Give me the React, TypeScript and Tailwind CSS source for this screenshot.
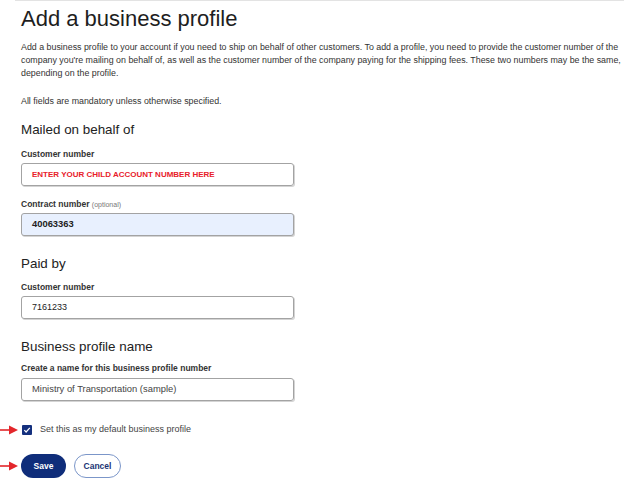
import React from "react";

const font = { fontFamily: '"Liberation Sans", Arial, sans-serif' };

function Arrow() {
  return (
    <svg width="19" height="10" viewBox="0 0 19 10" className="absolute left-[-22px] top-1/2 -translate-y-1/2">
      <line x1="0" y1="5" x2="12" y2="5" stroke="#e3262b" strokeWidth="1.6" />
      <polygon points="10,0.5 19,5 10,9.5" fill="#e3262b" />
    </svg>
  );
}

function Label({ children, className = "" }: { children: React.ReactNode; className?: string }) {
  return (
    <div className={`text-[8.5px] leading-[11px] font-bold text-[#333] ${className}`}>{children}</div>
  );
}

function Field({
  value,
  className = "",
  textClass = "",
}: {
  value: string;
  className?: string;
  textClass?: string;
}) {
  return (
    <div
      className={`mt-[3px] flex h-[23px] w-[273px] items-center rounded-[3px] border border-[#a3a3a3] pl-[10px] shadow-[1px_1px_0_#d4d4d4] ${className}`}
    >
      <span className={textClass}>{value}</span>
    </div>
  );
}

export default function App() {
  return (
    <div className="min-h-[484px] w-[624px] bg-white" style={font}>
      <div className="ml-[15px] h-px bg-[#e3e3e3]" />
      <div className="pl-[21px] pr-[4px]">
        <h1 className="mt-[4px] text-[22px] leading-[28px] font-normal text-[#1e1e1e]">
          Add a business profile
        </h1>
        <p className="mt-[8px] text-[8.85px] leading-[13px] text-[#333]">
          <span className="block whitespace-nowrap">
            Add a business profile to your account if you need to ship on behalf of other customers. To add a profile, you need to provide the customer number of the
          </span>
          <span className="block whitespace-nowrap">
            company you're mailing on behalf of, as well as the customer number of the company paying for the shipping fees. These two numbers may be the same,
          </span>
          <span className="block whitespace-nowrap">depending on the profile.</span>
        </p>
        <p className="mt-[15px] text-[8.85px] leading-[13px] text-[#333]">
          All fields are mandatory unless otherwise specified.
        </p>

        <h2 className="mt-[14px] text-[13.4px] leading-[16px] text-[#222]">Mailed on behalf of</h2>
        <Label className="mt-[11px]">Customer number</Label>
        <Field
          value="ENTER YOUR CHILD ACCOUNT NUMBER HERE"
          textClass="text-[8px] font-bold text-[#e8202a]"
        />
        <Label className="mt-[13px]">
          Contract number <span className="text-[7px] font-normal text-[#777]">(optional)</span>
        </Label>
        <Field
          value="40063363"
          className="bg-[#e8f0fe]"
          textClass="text-[9.4px] font-bold text-[#222]"
        />

        <h2 className="mt-[20px] text-[13.4px] leading-[16px] text-[#222]">Paid by</h2>
        <Label className="mt-[10px]">Customer number</Label>
        <Field value="7161233" textClass="text-[9px] text-[#222]" />

        <h2 className="mt-[20px] text-[13.4px] leading-[16px] text-[#222]">Business profile name</h2>
        <Label className="mt-[8px]">Create a name for this business profile number</Label>
        <Field
          value="Ministry of Transportation (sample)"
          className="mt-[4px]"
          textClass="text-[9.4px] text-[#444]"
        />

        <div className="relative mt-[23px] flex items-center gap-[8px]">
          <Arrow />
          <div className="ml-px flex h-[10px] w-[10px] items-center justify-center rounded-[1px] bg-[#14307e]">
            <svg width="8" height="8" viewBox="0 0 8 8">
              <path d="M1.3 4.2 L3.1 6 L6.8 1.8" fill="none" stroke="#fff" strokeWidth="1.2" />
            </svg>
          </div>
          <span className="text-[9px] leading-[11px] text-[#444]">
            Set this as my default business profile
          </span>
        </div>

        <div className="relative mt-[19px] flex items-center gap-[8px]">
          <Arrow />
          <button className="h-[24px] w-[45px] rounded-full bg-[#0f2d7a] text-[8.5px] font-bold text-white">
            Save
          </button>
          <button className="h-[24px] w-[47px] rounded-full border border-[#7b96c9] bg-white text-[8.5px] font-bold text-[#1c3575]">
            Cancel
          </button>
        </div>
      </div>
    </div>
  );
}
